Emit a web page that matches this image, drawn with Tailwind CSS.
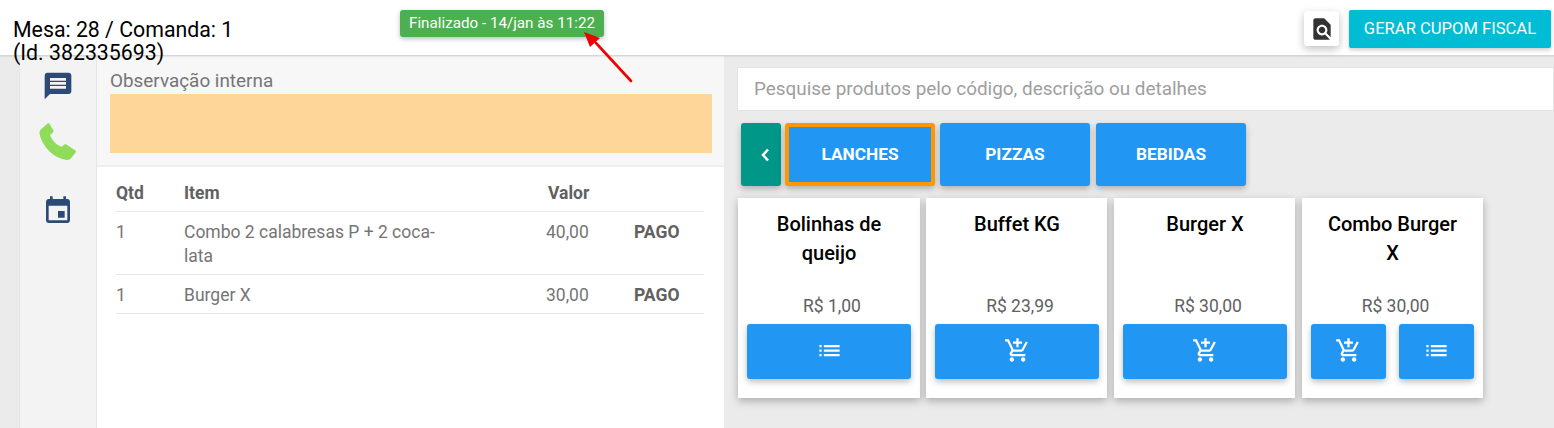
<!DOCTYPE html>
<html lang="pt-br">
<head>
  <meta charset="UTF-8">
  <title>Comanda</title>
  <script src="https://cdn.jsdelivr.net/npm/@tailwindcss/browser@4"></script>
</head>
<body class="relative h-[428px] w-[1554px] overflow-hidden bg-[#ebebeb] font-['Roboto',sans-serif]">

  <!-- topo -->
  <header class="relative z-10 flex h-[56px] items-start border-b border-[#d6d6d6] bg-white shadow-[0_1px_1px_rgba(0,0,0,0.06)]">
    <div class="ml-[13px] mt-[18px] w-[260px] text-[21.3px] leading-[23px] text-black">Mesa: 28 / Comanda: 1<br>(Id. 382335693)</div>
    <div class="ml-[127px] mt-[10px] flex h-[27px] w-[204px] items-center justify-center rounded-[3px] bg-[#4caf50] text-[15.2px] text-white shadow-[0_2px_5px_rgba(0,0,0,0.25)]">Finalizado - 14/jan às 11:22</div>
    <div class="ml-auto mr-[3px] mt-[10px] flex items-start gap-[10px]">
      <button class="mt-px flex h-[35px] w-[35px] items-center justify-center rounded-[3px] bg-white shadow-[0_3px_8px_rgba(0,0,0,0.25)]">
        <svg class="h-[26px] w-[26px] fill-[#333]" viewBox="0 0 24 24"><path d="M20 19.59V8l-6-6H6c-1.1 0-1.99.9-1.99 2L4 20c0 1.1.89 2 2 2h12c.45 0 .85-.15 1.19-.4l-4.43-4.43c-.8.52-1.74.83-2.76.83-2.76 0-5-2.24-5-5s2.24-5 5-5 5 2.24 5 5c0 1.02-.31 1.96-.83 2.75L20 19.59zM9 13c0 1.66 1.34 3 3 3s3-1.34 3-3-1.34-3-3-3-3 1.34-3 3z"/></svg>
      </button>
      <button class="h-[38px] w-[202px] rounded-[2px] bg-[#00bcd4] text-[16.6px] text-white shadow-[0_2px_4px_rgba(0,0,0,0.2)]">GERAR CUPOM FISCAL</button>
    </div>
  </header>

  <main class="flex h-[372px]">
    <!-- coluna de icones -->
    <div class="ml-[19px] flex w-[78px] flex-col items-center border-x border-[#e6e6e6] bg-[#f3f3f3] pt-[14px]">
      <svg class="h-[32px] w-[32px] fill-[#2d4a77]" viewBox="0 0 24 24"><path d="M20 2H4c-1.1 0-1.99.9-1.99 2L2 22l4-4h14c1.1 0 2-.9 2-2V4c0-1.1-.9-2-2-2zm-2 12H6v-2h12v2zm0-3H6V9h12v2zm0-3H6V6h12v2z"/></svg>
      <svg class="mr-[2px] mt-[21px] h-[37px] w-[37px] fill-[#8fdc5b]" viewBox="0 0 37 37"><path d="M8.5 0.5 C9.5 0 10.2 0.3 10.7 1 L14.3 7.2 C14.8 8 14.6 8.8 14 9.4 L11 12 C11.8 14.5 13.5 17 15.6 19.2 C17.6 21.2 20 23 22.6 23.8 L25.4 21.6 C26 21.2 26.8 21.2 27.4 21.6 L36.4 27.6 C37.1 28.2 37.2 29 36.6 29.6 L31.8 35.6 C30.9 36.7 29.6 37 28 36.9 C21.5 36.2 15.5 33.2 10.5 28.4 C5.2 23.2 1.6 16.8 0.6 10.8 C0.3 9.2 0.6 7.9 1.6 6.8 Z"/></svg>
      <svg class="mr-[1px] mt-[35px] h-[32px] w-[32px] fill-[#2d4a77]" viewBox="0 0 24 24"><path d="M17 12h-5v5h5v-5zM16 1v2H8V1H6v2H5c-1.11 0-1.99.9-1.99 2L3 19c0 1.1.89 2 2 2h14c1.1 0 2-.9 2-2V5c0-1.1-.9-2-2-2h-1V1h-2zm3 18H5V8h14v11z"/></svg>
    </div>

    <!-- pedido -->
    <section class="w-[627px] bg-white">
      <div class="h-[111px] border-b-2 border-[#efefef] bg-[#f7f7f7] pl-[13px] pr-[12px] pt-[13px]">
        <div class="h-[25px] text-[18.9px] leading-[24px] text-[#757575]">Observação interna</div>
        <div class="h-[59px] bg-[#ffd699]"></div>
      </div>
      <div class="ml-[19px] mr-[20px] mt-[10px] text-[17.5px] text-[#757575]">
        <div class="flex h-[35px] items-center border-b border-[#e8e8e8] pb-[2px] font-bold text-[#616161]">
          <div class="w-[68px]">Qtd</div>
          <div class="w-[364px]">Item</div>
          <div class="w-[86px]">Valor</div>
        </div>
        <div class="flex h-[63px] items-start border-b border-[#e8e8e8] pt-[8px] leading-[24px]">
          <div class="w-[68px]">1</div>
          <div class="w-[362px] pr-[98px]">Combo 2 calabresas P + 2 coca-lata</div>
          <div class="w-[88px]">40,00</div>
          <div class="font-bold text-[#616161]">PAGO</div>
        </div>
        <div class="flex h-[39px] items-center border-b border-[#e8e8e8] pt-[2px]">
          <div class="w-[68px]">1</div>
          <div class="w-[362px]">Burger X</div>
          <div class="w-[88px]">30,00</div>
          <div class="font-bold text-[#616161]">PAGO</div>
        </div>
      </div>
    </section>

    <!-- produtos -->
    <section class="flex-1 pl-[13px] pt-[11px]">
      <div class="flex h-[44px] items-center border border-[#e2e2e2] bg-white pl-[16px] pt-[1px] text-[18.9px] text-[#9e9e9e]">Pesquise produtos pelo código, descrição ou detalhes</div>

      <div class="ml-[4px] mt-[12px] flex h-[63px] text-[17.3px] font-bold text-white">
        <button class="flex w-[40px] items-center justify-center rounded-[3px] bg-[#009688] shadow-[0_3px_6px_rgba(0,0,0,0.25)]">
          <svg class="ml-[8px] h-[14px] w-[10px]" viewBox="0 0 10 14"><path d="M8 1.5 3 7l5 5.5" fill="none" stroke="#fff" stroke-width="2.6"/></svg>
        </button>
        <button class="ml-[4px] w-[150px] rounded-[3px] border-4 border-[#ff9800] bg-[#2196f3] pt-[1px] shadow-[0_3px_6px_rgba(0,0,0,0.25)]">LANCHES</button>
        <button class="ml-[5px] w-[150px] rounded-[3px] bg-[#2196f3] pt-[1px] shadow-[0_3px_6px_rgba(0,0,0,0.25)]">PIZZAS</button>
        <button class="ml-[6px] w-[150px] rounded-[3px] bg-[#2196f3] pt-[1px] shadow-[0_3px_6px_rgba(0,0,0,0.25)]">BEBIDAS</button>
      </div>

      <div class="ml-px mt-[12px] flex">
        <article class="h-[200px] w-[182px] bg-white px-[9px] shadow-[0_3px_8px_rgba(0,0,0,0.28)]">
          <h3 class="h-[96px] pt-[12px] text-center text-[20px] font-medium leading-[29px] text-black">Bolinhas de<br>queijo</h3>
          <div class="h-[30px] pl-[6px] text-center text-[17.5px] leading-[24px] text-[#616161]">R$ 1,00</div>
          <button class="flex h-[55px] w-full items-center justify-center rounded-[3px] bg-[#2196f3] pb-[3px] shadow-[0_3px_6px_rgba(0,0,0,0.25)]">
            <svg class="h-[27px] w-[27px] fill-white" viewBox="0 0 24 24"><path d="M3 13h2v-2H3v2zm0 4h2v-2H3v2zm0-8h2V7H3v2zm4 4h14v-2H7v2zm0 4h14v-2H7v2zM7 7v2h14V7H7z"/></svg>
          </button>
        </article>
        <article class="ml-[6px] h-[200px] w-[181px] bg-white pl-[9px] pr-[8px] shadow-[0_3px_8px_rgba(0,0,0,0.28)]">
          <h3 class="h-[96px] pt-[12px] text-center text-[20px] font-medium leading-[29px] text-black">Buffet KG</h3>
          <div class="h-[30px] pl-[6px] text-center text-[17.5px] leading-[24px] text-[#616161]">R$ 23,99</div>
          <button class="flex h-[55px] w-full items-center justify-center rounded-[3px] bg-[#2196f3] pb-[3px] shadow-[0_3px_6px_rgba(0,0,0,0.25)]">
            <svg class="h-[27px] w-[27px] fill-white" viewBox="0 0 24 24"><path d="M11 9h2V6h3V4h-3V1h-2v3H8v2h3v3zm-4 9c-1.1 0-1.99.9-1.99 2S5.9 22 7 22s2-.9 2-2-.9-2-2-2zm10 0c-1.1 0-1.99.9-1.99 2s.89 2 1.99 2 2-.9 2-2-.9-2-2-2zm-9.83-3.25l.03-.12.9-1.63h7.45c.75 0 1.41-.41 1.75-1.03l3.86-7.01L19.42 4h-.01l-1.1 2-2.76 5H8.53l-.13-.27L6.16 6l-.95-2-.94-2H1v2h2l3.6 7.59-1.35 2.45c-.16.28-.25.61-.25.96 0 1.1.9 2 2 2h12v-2H7.42c-.13 0-.25-.11-.25-.25z"/></svg>
          </button>
        </article>
        <article class="ml-[7px] h-[200px] w-[181px] bg-white pl-[9px] pr-[8px] shadow-[0_3px_8px_rgba(0,0,0,0.28)]">
          <h3 class="h-[96px] pt-[12px] text-center text-[20px] font-medium leading-[29px] text-black">Burger X</h3>
          <div class="h-[30px] pl-[6px] text-center text-[17.5px] leading-[24px] text-[#616161]">R$ 30,00</div>
          <button class="flex h-[55px] w-full items-center justify-center rounded-[3px] bg-[#2196f3] pb-[3px] shadow-[0_3px_6px_rgba(0,0,0,0.25)]">
            <svg class="h-[27px] w-[27px] fill-white" viewBox="0 0 24 24"><path d="M11 9h2V6h3V4h-3V1h-2v3H8v2h3v3zm-4 9c-1.1 0-1.99.9-1.99 2S5.9 22 7 22s2-.9 2-2-.9-2-2-2zm10 0c-1.1 0-1.99.9-1.99 2s.89 2 1.99 2 2-.9 2-2-.9-2-2-2zm-9.83-3.25l.03-.12.9-1.63h7.45c.75 0 1.41-.41 1.75-1.03l3.86-7.01L19.42 4h-.01l-1.1 2-2.76 5H8.53l-.13-.27L6.16 6l-.95-2-.94-2H1v2h2l3.6 7.59-1.35 2.45c-.16.28-.25.61-.25.96 0 1.1.9 2 2 2h12v-2H7.42c-.13 0-.25-.11-.25-.25z"/></svg>
          </button>
        </article>
        <article class="ml-[7px] h-[200px] w-[181px] bg-white px-[9px] shadow-[0_3px_8px_rgba(0,0,0,0.28)]">
          <h3 class="h-[96px] pt-[12px] text-center text-[20px] font-medium leading-[29px] text-black">Combo Burger<br>X</h3>
          <div class="h-[30px] pl-[6px] text-center text-[17.5px] leading-[24px] text-[#616161]">R$ 30,00</div>
          <div class="flex gap-[13px]">
            <button class="flex h-[55px] w-[75px] items-center justify-center rounded-[3px] bg-[#2196f3] pb-[3px] shadow-[0_3px_6px_rgba(0,0,0,0.25)]">
              <svg class="h-[27px] w-[27px] fill-white" viewBox="0 0 24 24"><path d="M11 9h2V6h3V4h-3V1h-2v3H8v2h3v3zm-4 9c-1.1 0-1.99.9-1.99 2S5.9 22 7 22s2-.9 2-2-.9-2-2-2zm10 0c-1.1 0-1.99.9-1.99 2s.89 2 1.99 2 2-.9 2-2-.9-2-2-2zm-9.83-3.25l.03-.12.9-1.63h7.45c.75 0 1.41-.41 1.75-1.03l3.86-7.01L19.42 4h-.01l-1.1 2-2.76 5H8.53l-.13-.27L6.16 6l-.95-2-.94-2H1v2h2l3.6 7.59-1.35 2.45c-.16.28-.25.61-.25.96 0 1.1.9 2 2 2h12v-2H7.42c-.13 0-.25-.11-.25-.25z"/></svg>
            </button>
            <button class="flex h-[55px] w-[75px] items-center justify-center rounded-[3px] bg-[#2196f3] pb-[3px] shadow-[0_3px_6px_rgba(0,0,0,0.25)]">
              <svg class="h-[27px] w-[27px] fill-white" viewBox="0 0 24 24"><path d="M3 13h2v-2H3v2zm0 4h2v-2H3v2zm0-8h2V7H3v2zm4 4h14v-2H7v2zm0 4h14v-2H7v2zM7 7v2h14V7H7z"/></svg>
            </button>
          </div>
        </article>
      </div>
    </section>
  </main>

  <!-- seta vermelha sobre o status -->
  <svg class="absolute left-[580px] top-[28px] z-20 h-[58px] w-[56px]" viewBox="0 0 56 58">
    <path d="M51 53 16 15" fill="none" stroke="#f00000" stroke-width="2.6" stroke-linecap="round"/>
    <path d="M4 4 20 10 10 19Z" fill="#f00000"/>
  </svg>
</body>
</html>
